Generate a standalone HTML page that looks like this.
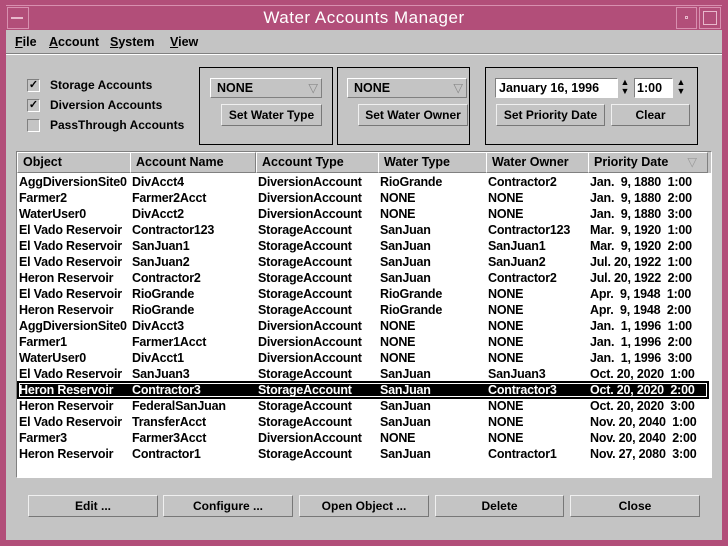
<!DOCTYPE html>
<html><head><style>
*{margin:0;padding:0;box-sizing:border-box}
body{width:728px;height:546px;background:#b24e79;position:relative;overflow:hidden;font-family:"Liberation Sans",sans-serif;font-size:12px;font-weight:bold;color:#000}
.a{position:absolute}
.btn{position:absolute;border:1px solid;border-color:#f0f0f0 #777 #777 #f0f0f0;background:#c4c4c4;text-align:center;line-height:20px;font-size:12px}
.grp{position:absolute;border:1px solid #000}
.cb{position:absolute;width:13px;height:13px;border:1px solid;border-color:#808080 #fff #fff #808080;background:#c4c4c4;font-size:11px;line-height:11px;text-align:center}
.lbl{position:absolute;font-size:12px}
.sel{position:absolute;border:1px solid;border-color:#fff #808080 #808080 #fff;background:#c4c4c4;height:20px;line-height:18px;padding-left:6px;font-size:12.5px}
.sel span{position:absolute;right:3px;top:0;color:#888;font-weight:normal}
.hd{position:absolute;top:152px;height:21px;border:1px solid;border-color:#fff #808080 #808080 #fff;background:#c4c4c4;line-height:19px;padding-left:5px;font-size:12.5px}
.row{position:absolute;left:18px;width:690px;height:16px;line-height:16px;font-size:12.5px;font-weight:normal;white-space:nowrap}
.row span{position:absolute;top:0;font-weight:bold;letter-spacing:-0.2px}
.row.s{background:#000;color:#fff;box-shadow:inset 0 0 0 1px #000,inset 0 0 0 2px #fff;outline:1px solid #000}
</style></head><body>
<div class="a" style="left:6px;top:5px;width:716px;height:25px;background:#b24e79;border-top:1px solid #d890b0"></div>
<div class="a" style="left:7px;top:7px;width:22px;height:22px;border:1px solid #d890b0"></div>
<div class="a" style="left:11px;top:17px;width:12px;height:2px;background:#e8b8cc"></div>
<div class="a" style="left:0;top:7px;width:728px;text-align:center;color:#fff;font-weight:normal;font-size:17px;line-height:22px;letter-spacing:0.5px">Water Accounts Manager</div>
<div class="a" style="left:676px;top:7px;width:21px;height:22px;border:1px solid #d890b0"></div>
<div class="a" style="left:685px;top:16px;width:3px;height:3px;border:1px solid #e8b8cc"></div>
<div class="a" style="left:699px;top:7px;width:22px;height:22px;border:1px solid #d890b0"></div>
<div class="a" style="left:703px;top:11px;width:14px;height:14px;border:1px solid #e8b8cc"></div>
<div class="a" style="left:6px;top:30px;width:716px;height:510px;background:#c4c4c4"></div>
<div class="a" style="left:6px;top:30px;width:716px;height:24px;border-bottom:1px solid #808080;box-shadow:0 1px 0 #fff"></div>
<div class="a" style="left:15px;top:34px;font-size:12.5px;line-height:16px"><u>F</u>ile</div>
<div class="a" style="left:49px;top:34px;font-size:12.5px;line-height:16px"><u>A</u>ccount</div>
<div class="a" style="left:110px;top:34px;font-size:12.5px;line-height:16px"><u>S</u>ystem</div>
<div class="a" style="left:170px;top:34px;font-size:12.5px;line-height:16px"><u>V</u>iew</div>
<div class="cb" style="left:27px;top:79px">✓</div><div class="lbl" style="left:50px;top:78px">Storage Accounts</div>
<div class="cb" style="left:27px;top:99px">✓</div><div class="lbl" style="left:50px;top:98px">Diversion Accounts</div>
<div class="cb" style="left:27px;top:119px"></div><div class="lbl" style="left:50px;top:118px">PassThrough Accounts</div>
<div class="grp" style="left:199px;top:67px;width:134px;height:78px"></div>
<div class="sel" style="left:210px;top:78px;width:112px">NONE<span>▽</span></div>
<div class="btn" style="left:221px;top:104px;width:101px;height:22px">Set Water Type</div>
<div class="grp" style="left:337px;top:67px;width:133px;height:78px"></div>
<div class="sel" style="left:347px;top:78px;width:120px">NONE<span>▽</span></div>
<div class="btn" style="left:358px;top:104px;width:110px;height:22px">Set Water Owner</div>
<div class="grp" style="left:485px;top:67px;width:213px;height:78px"></div>
<div class="a" style="left:495px;top:78px;width:123px;height:20px;background:#fff;border:1px solid;border-color:#808080 #fff #fff #808080;padding-left:3px;line-height:18px;font-size:12.5px">January 16, 1996</div>
<div class="a" style="left:618px;top:78px;width:14px;height:20px;font-size:9px;line-height:9px;text-align:center">▲<br>▼</div>
<div class="a" style="left:634px;top:78px;width:39px;height:20px;background:#fff;border:1px solid;border-color:#808080 #fff #fff #808080;padding-left:2px;line-height:18px;font-size:12.5px">1:00</div>
<div class="a" style="left:674px;top:78px;width:14px;height:20px;font-size:9px;line-height:9px;text-align:center">▲<br>▼</div>
<div class="btn" style="left:496px;top:104px;width:109px;height:22px">Set Priority Date</div>
<div class="btn" style="left:611px;top:104px;width:79px;height:22px">Clear</div>
<div class="a" style="left:16px;top:151px;width:696px;height:327px;background:#fff;border:1px solid;border-color:#808080 #fff #fff #808080"></div>
<div class="hd" style="left:17px;width:114px">Object</div>
<div class="hd" style="left:130px;width:126px">Account Name</div>
<div class="hd" style="left:256px;width:123px">Account Type</div>
<div class="hd" style="left:378px;width:109px">Water Type</div>
<div class="hd" style="left:486px;width:103px">Water Owner</div>
<div class="hd" style="left:588px;width:120px">Priority Date <span style="position:absolute;right:10px;color:#999;font-weight:normal">▽</span></div>
<div class="a" style="left:708px;top:152px;width:3px;height:21px;background:#c4c4c4"></div>
<div id="rows"></div>
<div class="btn" style="left:28px;top:495px;width:130px;height:22px">Edit ...</div>
<div class="btn" style="left:163px;top:495px;width:130px;height:22px">Configure ...</div>
<div class="btn" style="left:299px;top:495px;width:130px;height:22px">Open Object ...</div>
<div class="btn" style="left:435px;top:495px;width:129px;height:22px">Delete</div>
<div class="btn" style="left:570px;top:495px;width:130px;height:22px">Close</div>
<script>
var d=[
["AggDiversionSite0","DivAcct4","DiversionAccount","RioGrande","Contractor2","Jan.  9, 1880  1:00"],
["Farmer2","Farmer2Acct","DiversionAccount","NONE","NONE","Jan.  9, 1880  2:00"],
["WaterUser0","DivAcct2","DiversionAccount","NONE","NONE","Jan.  9, 1880  3:00"],
["El Vado Reservoir","Contractor123","StorageAccount","SanJuan","Contractor123","Mar.  9, 1920  1:00"],
["El Vado Reservoir","SanJuan1","StorageAccount","SanJuan","SanJuan1","Mar.  9, 1920  2:00"],
["El Vado Reservoir","SanJuan2","StorageAccount","SanJuan","SanJuan2","Jul. 20, 1922  1:00"],
["Heron Reservoir","Contractor2","StorageAccount","SanJuan","Contractor2","Jul. 20, 1922  2:00"],
["El Vado Reservoir","RioGrande","StorageAccount","RioGrande","NONE","Apr.  9, 1948  1:00"],
["Heron Reservoir","RioGrande","StorageAccount","RioGrande","NONE","Apr.  9, 1948  2:00"],
["AggDiversionSite0","DivAcct3","DiversionAccount","NONE","NONE","Jan.  1, 1996  1:00"],
["Farmer1","Farmer1Acct","DiversionAccount","NONE","NONE","Jan.  1, 1996  2:00"],
["WaterUser0","DivAcct1","DiversionAccount","NONE","NONE","Jan.  1, 1996  3:00"],
["El Vado Reservoir","SanJuan3","StorageAccount","SanJuan","SanJuan3","Oct. 20, 2020  1:00"],
["Heron Reservoir","Contractor3","StorageAccount","SanJuan","Contractor3","Oct. 20, 2020  2:00"],
["Heron Reservoir","FederalSanJuan","StorageAccount","SanJuan","NONE","Oct. 20, 2020  3:00"],
["El Vado Reservoir","TransferAcct","StorageAccount","SanJuan","NONE","Nov. 20, 2040  1:00"],
["Farmer3","Farmer3Acct","DiversionAccount","NONE","NONE","Nov. 20, 2040  2:00"],
["Heron Reservoir","Contractor1","StorageAccount","SanJuan","Contractor1","Nov. 27, 2080  3:00"]];
var xs=[1,114,240,362,470,572],h="";
d.forEach(function(r,i){h+='<div class="row'+(i==13?' s':'')+'" style="top:'+(174+i*16)+'px">';
r.forEach(function(c,j){h+='<span style="left:'+xs[j]+'px;white-space:pre">'+c+'</span>'});h+='</div>'});
document.getElementById('rows').innerHTML=h;
</script>
</body></html>
